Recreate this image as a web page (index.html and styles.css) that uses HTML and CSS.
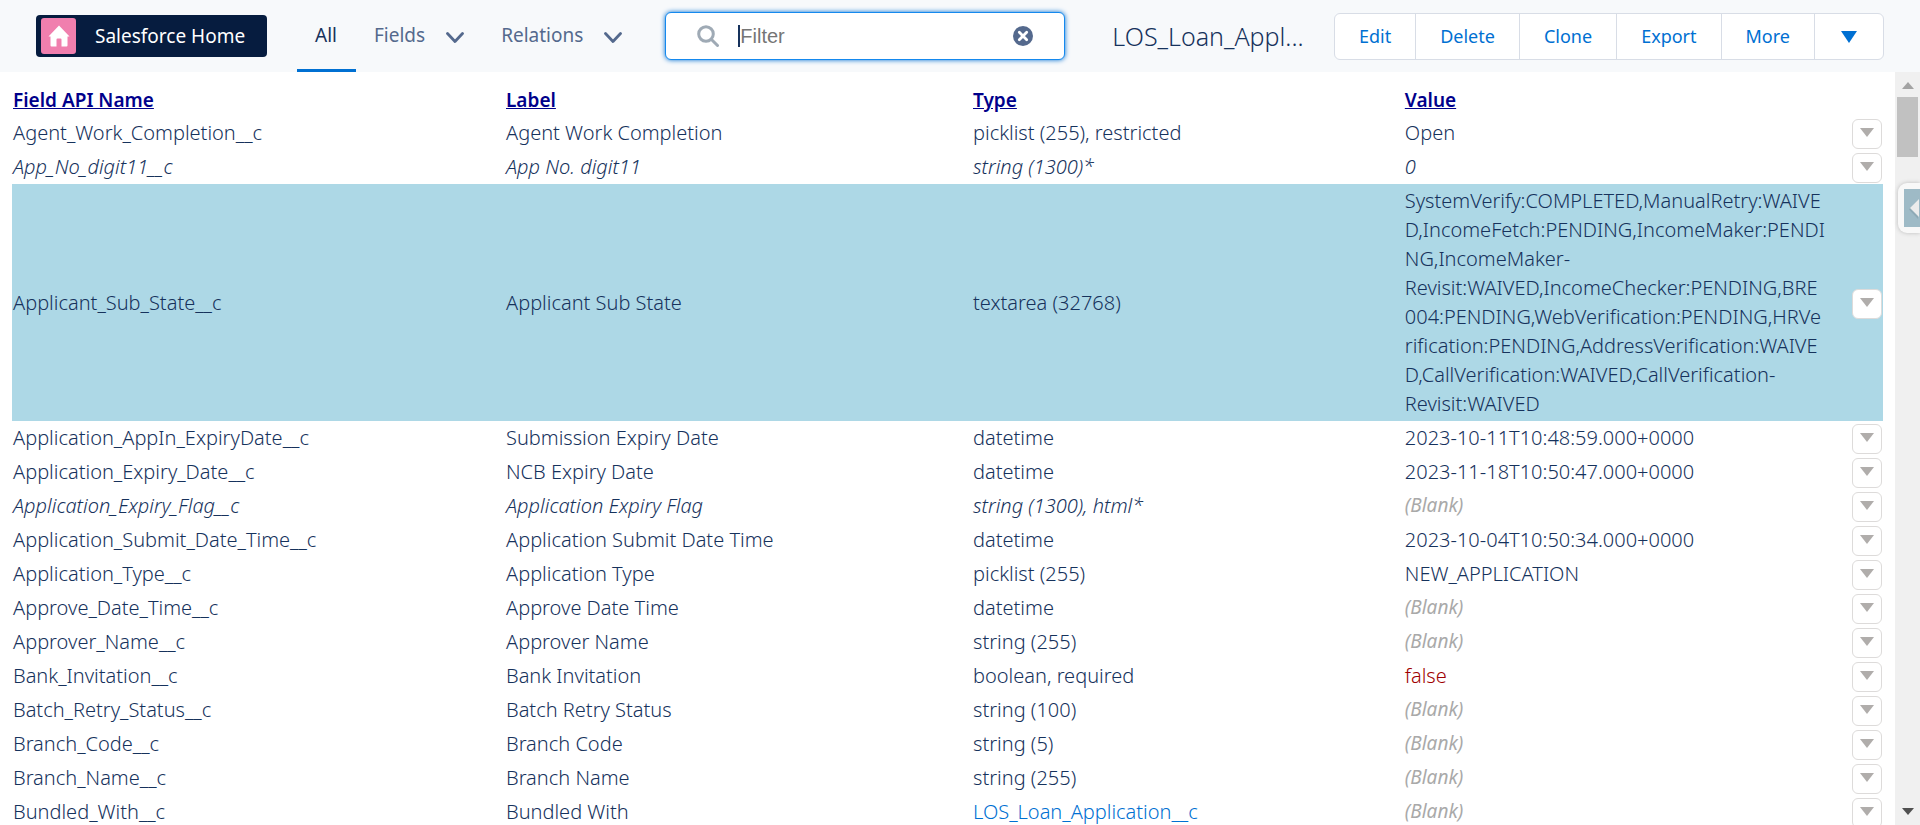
FILE: index.html
```html
<!DOCTYPE html>
<html lang="en">
<head>
<meta charset="utf-8">
<title>Salesforce Home</title>
<link rel="stylesheet" href="styles.css">
</head>
<body>
<svg class="sprite" aria-hidden="true">
  <symbol id="chevron" viewBox="0 0 18 12"><path d="M1.500 1.500 9 9.500 16.500 1.500" fill="none" stroke="currentColor" stroke-width="2.800" stroke-linecap="round" stroke-linejoin="round"/></symbol>
  <symbol id="down" viewBox="0 0 14 9"><path d="M0 0H14L7 9Z" fill="currentColor"/></symbol>
</svg>
<header class="topbar">
  <a class="home" href="#">
    <span class="home-icon"><svg viewBox="0 0 22 22" width="22" height="22"><path d="M11 .5 21.500 11.500H19.500V20.500Q19.500 21.500 18.500 21.500H13.500V14.500Q13.500 13.500 12.500 13.500H9.500Q8.500 13.500 8.500 14.500V21.500H3.500Q2.500 21.500 2.500 20.500V11.500H.5Z" fill="#fff"/></svg></span>
    <span class="home-text">Salesforce Home</span>
  </a>
  <nav class="tabs">
    <a class="tab active" href="#">All</a>
    <a class="tab" href="#">Fields<svg class="chev"><use href="#chevron"/></svg></a>
    <a class="tab" href="#">Relations<svg class="chev"><use href="#chevron"/></svg></a>
  </nav>
  <div class="search">
    <svg class="lens" viewBox="0 0 22 22"><circle cx="9" cy="9" r="7.300" fill="none" stroke="#9faab5" stroke-width="3"/><path d="M14.500 14.500 20.500 20.500" stroke="#9faab5" stroke-width="3" stroke-linecap="round"/></svg>
    <span class="caret"></span>
    <input class="filter" type="text" placeholder="Filter" aria-label="Filter">
    <button class="clear" type="button" aria-label="Clear filter"><svg viewBox="0 0 20 20" width="20" height="20"><circle cx="10" cy="10" r="10" fill="#54698d"/><path d="M6.300 6.300 13.700 13.700M13.700 6.300 6.300 13.700" stroke="#fff" stroke-width="2.800" stroke-linecap="round"/></svg></button>
  </div>
  <h1 class="title">LOS_Loan_Appl...</h1>
  <div class="actions">
    <button type="button">Edit</button>
    <button type="button">Delete</button>
    <button type="button">Clone</button>
    <button type="button">Export</button>
    <button type="button">More</button>
    <button type="button" class="menu" aria-label="More actions"><svg width="16" height="12" viewBox="0 0 16 12"><path d="M0 0H16L8 12Z" fill="currentColor"/></svg></button>
  </div>
</header>
<div class="body">
<main class="content">
<table class="fields">
  <colgroup><col class="c-name"><col class="c-label"><col class="c-type"><col class="c-value"><col class="c-act"></colgroup>
  <thead><tr><th><a href="#">Field API Name</a></th><th><a href="#">Label</a></th><th><a href="#">Type</a></th><th><a href="#">Value</a></th><th></th></tr></thead>
  <tbody>
  <tr><td>Agent_Work_Completion__c</td><td>Agent Work Completion</td><td>picklist (255), restricted</td><td>Open</td><td class="act"><button type="button" aria-label="Actions"><svg><use href="#down"/></svg></button></td></tr>
  <tr class="calc"><td>App_No_digit11__c</td><td>App No. digit11</td><td>string (1300)*</td><td>0</td><td class="act"><button type="button" aria-label="Actions"><svg><use href="#down"/></svg></button></td></tr>
  <tr class="hover"><td>Applicant_Sub_State__c</td><td>Applicant Sub State</td><td>textarea (32768)</td><td>SystemVerify:COMPLETED,ManualRetry:WAIVE<br>D,IncomeFetch:PENDING,IncomeMaker:PENDI<br>NG,IncomeMaker-<br>Revisit:WAIVED,IncomeChecker:PENDING,BRE<br>004:PENDING,WebVerification:PENDING,HRVe<br>rification:PENDING,AddressVerification:WAIVE<br>D,CallVerification:WAIVED,CallVerification-<br>Revisit:WAIVED</td><td class="act"><button type="button" aria-label="Actions"><svg><use href="#down"/></svg></button></td></tr>
  <tr><td>Application_AppIn_ExpiryDate__c</td><td>Submission Expiry Date</td><td>datetime</td><td>2023-10-11T10:48:59.000+0000</td><td class="act"><button type="button" aria-label="Actions"><svg><use href="#down"/></svg></button></td></tr>
  <tr><td>Application_Expiry_Date__c</td><td>NCB Expiry Date</td><td>datetime</td><td>2023-11-18T10:50:47.000+0000</td><td class="act"><button type="button" aria-label="Actions"><svg><use href="#down"/></svg></button></td></tr>
  <tr class="calc"><td>Application_Expiry_Flag__c</td><td>Application Expiry Flag</td><td>string (1300), html*</td><td class="blank">(Blank)</td><td class="act"><button type="button" aria-label="Actions"><svg><use href="#down"/></svg></button></td></tr>
  <tr><td>Application_Submit_Date_Time__c</td><td>Application Submit Date Time</td><td>datetime</td><td>2023-10-04T10:50:34.000+0000</td><td class="act"><button type="button" aria-label="Actions"><svg><use href="#down"/></svg></button></td></tr>
  <tr><td>Application_Type__c</td><td>Application Type</td><td>picklist (255)</td><td>NEW_APPLICATION</td><td class="act"><button type="button" aria-label="Actions"><svg><use href="#down"/></svg></button></td></tr>
  <tr><td>Approve_Date_Time__c</td><td>Approve Date Time</td><td>datetime</td><td class="blank">(Blank)</td><td class="act"><button type="button" aria-label="Actions"><svg><use href="#down"/></svg></button></td></tr>
  <tr><td>Approver_Name__c</td><td>Approver Name</td><td>string (255)</td><td class="blank">(Blank)</td><td class="act"><button type="button" aria-label="Actions"><svg><use href="#down"/></svg></button></td></tr>
  <tr><td>Bank_Invitation__c</td><td>Bank Invitation</td><td>boolean, required</td><td class="false">false</td><td class="act"><button type="button" aria-label="Actions"><svg><use href="#down"/></svg></button></td></tr>
  <tr><td>Batch_Retry_Status__c</td><td>Batch Retry Status</td><td>string (100)</td><td class="blank">(Blank)</td><td class="act"><button type="button" aria-label="Actions"><svg><use href="#down"/></svg></button></td></tr>
  <tr><td>Branch_Code__c</td><td>Branch Code</td><td>string (5)</td><td class="blank">(Blank)</td><td class="act"><button type="button" aria-label="Actions"><svg><use href="#down"/></svg></button></td></tr>
  <tr><td>Branch_Name__c</td><td>Branch Name</td><td>string (255)</td><td class="blank">(Blank)</td><td class="act"><button type="button" aria-label="Actions"><svg><use href="#down"/></svg></button></td></tr>
  <tr><td>Bundled_With__c</td><td>Bundled With</td><td><a class="ref" href="#">LOS_Loan_Application__c</a></td><td class="blank">(Blank)</td><td class="act"><button type="button" aria-label="Actions"><svg><use href="#down"/></svg></button></td></tr>
  </tbody>
</table>
</main>
<div class="scrollbar" aria-hidden="true">
  <svg class="up" width="12" height="7" viewBox="0 0 12 7"><path d="M0 7H12L6 0Z" fill="#a3a3a3"/></svg>
  <div class="thumb"></div>
  <svg class="dn" width="12" height="7" viewBox="0 0 12 7"><path d="M0 0H12L6 7Z" fill="#505050"/></svg>
</div>
<button class="flap" type="button" aria-label="Open side panel"><svg viewBox="0 0 16 38" width="16" height="38"><path d="M0 0H16V38H0Z" fill="#9ebac6"/><path d="M14 11 5 20.500 14 30Z" fill="#7f9aa6" opacity=".5"/><path d="M15 10V28L6 19Z" fill="#ececec"/></svg></button>
</div>
</body>
</html>
```

FILE: styles.css
```css
* { box-sizing: border-box; }
body {
  margin: 0;
  height: 100vh;
  display: flex;
  flex-direction: column;
  overflow: hidden;
  background: #fff;
  color: #16325c;
  font-family: "Noto Sans", "Open Sans", sans-serif;
  font-size: 19px;
  line-height: 29px;
}
button { font: inherit; cursor: pointer; }
a { color: inherit; text-decoration: none; }
.sprite { display: none; }

.topbar {
  display: flex;
  align-items: center;
  height: 72px;
  flex: none;
  padding: 0 36px;
  background: #f7f9fb;
}
.home {
  display: flex;
  align-items: center;
  width: 231px;
  height: 42px;
  padding-left: 5px;
  gap: 19px;
  border-radius: 4px;
  background: #061c3f;
  color: #fff;
  white-space: nowrap;
}
.home-icon {
  display: flex;
  align-items: center;
  justify-content: center;
  width: 35px;
  height: 36px;
  border-radius: 3px;
  background: #f07fae;
}
.tabs {
  display: flex;
  align-self: stretch;
  margin-left: 30px;
}
.tab {
  display: flex;
  align-items: center;
  padding: 0 19px 0 18px;
  color: #54698d;
  border-top: 2px solid transparent;
  border-bottom: 3px solid transparent;
}
.tab.active { color: #16325c; border-bottom-color: #0070d2; }
.chev { width: 18px; height: 12px; margin-left: 21px; margin-top: 4px; }
.search {
  display: flex;
  align-items: center;
  width: 400px;
  height: 48px;
  margin-left: 24px;
  padding: 0 31px;
  background: #fff;
  border: 1px solid #1589ee;
  border-radius: 6px;
  box-shadow: 0 0 5px #0070d2;
}
.lens { width: 22px; height: 22px; flex: none; }
.caret { width: 2px; height: 22px; margin-left: 19px; background: #16325c; }
.filter {
  flex: 1;
  min-width: 0;
  padding: 0;
  border: 0;
  outline: 0;
  background: none;
  font: 20px/29px "Liberation Sans", Arial, sans-serif;
  color: #16325c;
}
.filter::placeholder { color: #757575; }
.clear { display: flex; padding: 0; border: 0; background: none; }
.title {
  flex: 1;
  margin: 0 0 0 47px;
  font-size: 25px;
  line-height: 28px;
  font-weight: 300;
  white-space: nowrap;
}
.actions {
  display: flex;
  height: 47px;
  border: 1px solid #d8dde6;
  border-radius: 6px;
  background: #fff;
  overflow: hidden;
}
.actions button {
  padding: 0 24px;
  border: 0;
  border-left: 1px solid #d8dde6;
  background: none;
  color: #0070d2;
  font-size: 18px;
}
.actions button:first-child { border-left: 0; }
.actions .menu { padding: 0 26px; }

.body { display: flex; flex: 1; min-height: 0; position: relative; }
.content { flex: 1; min-width: 0; padding: 12px; overflow: hidden; }
.fields { width: 100%; table-layout: fixed; border-collapse: collapse; }
.c-name { width: 26.350%; }
.c-label { width: 24.960%; }
.c-type { width: 23.080%; }
.c-act { width: 32px; }
th, td { text-align: left; vertical-align: middle; white-space: nowrap; }
th { padding: 2px 1px 1px; font-weight: 600; }
td { padding: 2px 1px 3px; font-size: 20px; font-weight: 300; }
th a { color: #00008b; text-decoration: underline; }
.calc { font-style: italic; }
.hover { background: #add8e6; }
.blank { color: #a9a9a9; font-style: italic; font-weight: 400; font-size: 19px; }
.false { color: #a00000; }
.ref { color: #0070d2; }
.act { padding: 3px 1px 1px; }
.act button {
  display: flex;
  justify-content: center;
  width: 30px;
  height: 30px;
  padding: 8px 0 0;
  border: 1px solid #dddbda;
  border-radius: 6px;
  background: #fff;
  color: #b0adab;
}
.act svg { width: 14px; height: 9px; }

.scrollbar {
  display: flex;
  flex-direction: column;
  align-items: center;
  width: 25px;
  padding: 10px 0;
  background: #f0f0f0;
}
.thumb { width: 21px; height: 60px; margin-top: 8px; background: #c1c1c1; }
.dn { margin-top: auto; }
.flap {
  position: absolute;
  top: 111px;
  right: 0;
  display: flex;
  align-items: center;
  padding: 6px 0 6px 6px;
  border: 0;
  border-radius: 9px 0 0 9px;
  background: #f8f8f8;
  box-shadow: 0 0 4px #bbb;
}
```
